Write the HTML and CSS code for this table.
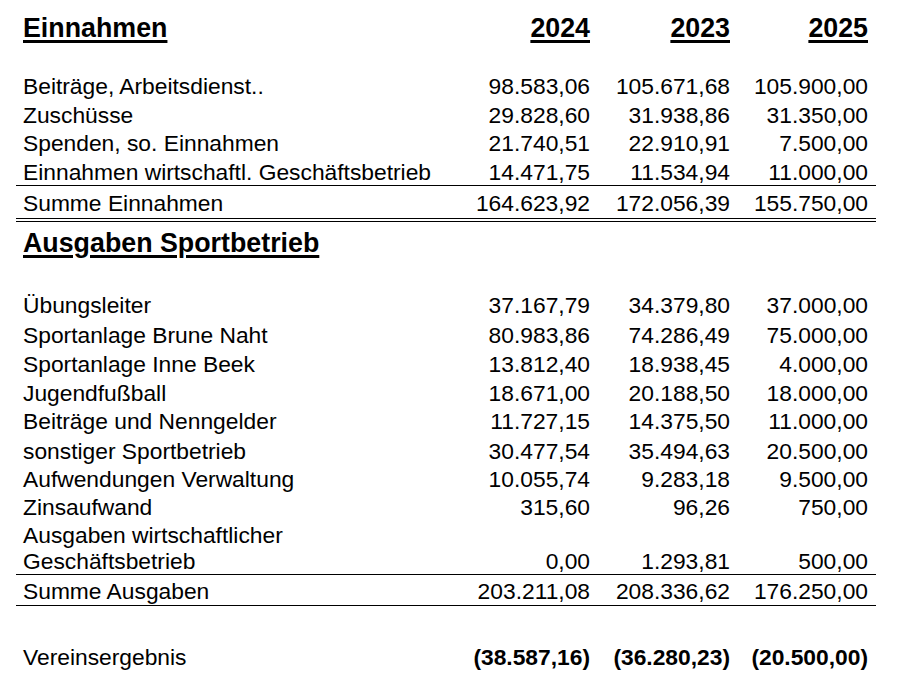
FILE: index.html
```html
<!DOCTYPE html>
<html lang="de">
<head>
<meta charset="utf-8">
<title>Haushalt</title>
<link rel="stylesheet" href="styles.css">
</head>
<body>
<div class="sheet">
  <div class="row hd">
    <div class="lab"><span class="u">Einnahmen</span></div>
    <div class="num"><span class="u">2024</span></div>
    <div class="num"><span class="u">2023</span></div>
    <div class="num"><span class="u">2025</span></div>
  </div>
  <div class="row h27"></div>
  <div class="row h29"><div class="lab">Beiträge, Arbeitsdienst..</div><div class="num">98.583,06</div><div class="num">105.671,68</div><div class="num">105.900,00</div></div>
  <div class="row h29"><div class="lab">Zuschüsse</div><div class="num">29.828,60</div><div class="num">31.938,86</div><div class="num">31.350,00</div></div>
  <div class="row h28"><div class="lab">Spenden, so. Einnahmen</div><div class="num">21.740,51</div><div class="num">22.910,91</div><div class="num">7.500,00</div></div>
  <div class="row h29 line"><div class="lab">Einnahmen wirtschaftl. Geschäftsbetrieb</div><div class="num">14.471,75</div><div class="num">11.534,94</div><div class="num">11.000,00</div></div>
  <div class="row sum1 line"><div class="lab">Summe Einnahmen</div><div class="num">164.623,92</div><div class="num">172.056,39</div><div class="num">155.750,00</div></div>
  <div class="row hd2">
    <div class="lab"><span class="u">Ausgaben Sportbetrieb</span></div>
    <div class="num"></div><div class="num"></div><div class="num"></div>
  </div>
  <div class="row h30"></div>
  <div class="row h30"><div class="lab">Übungsleiter</div><div class="num">37.167,79</div><div class="num">34.379,80</div><div class="num">37.000,00</div></div>
  <div class="row h30"><div class="lab">Sportanlage Brune Naht</div><div class="num">80.983,86</div><div class="num">74.286,49</div><div class="num">75.000,00</div></div>
  <div class="row h29"><div class="lab">Sportanlage Inne Beek</div><div class="num">13.812,40</div><div class="num">18.938,45</div><div class="num">4.000,00</div></div>
  <div class="row h29"><div class="lab">Jugendfußball</div><div class="num">18.671,00</div><div class="num">20.188,50</div><div class="num">18.000,00</div></div>
  <div class="row h28"><div class="lab">Beiträge und Nenngelder</div><div class="num">11.727,15</div><div class="num">14.375,50</div><div class="num">11.000,00</div></div>
  <div class="row h30"><div class="lab">sonstiger Sportbetrieb</div><div class="num">30.477,54</div><div class="num">35.494,63</div><div class="num">20.500,00</div></div>
  <div class="row h28"><div class="lab">Aufwendungen Verwaltung</div><div class="num">10.055,74</div><div class="num">9.283,18</div><div class="num">9.500,00</div></div>
  <div class="row h28"><div class="lab">Zinsaufwand</div><div class="num">315,60</div><div class="num">96,26</div><div class="num">750,00</div></div>
  <div class="row h54 line"><div class="lab">Ausgaben wirtschaftlicher<br>Geschäftsbetrieb</div><div class="num">0,00</div><div class="num">1.293,81</div><div class="num">500,00</div></div>
  <div class="row sum2 line"><div class="lab">Summe Ausgaben</div><div class="num">203.211,08</div><div class="num">208.336,62</div><div class="num">176.250,00</div></div>
  <div class="row h32"></div>
  <div class="row h32"><div class="lab">Vereinsergebnis</div><div class="num b">(38.587,16)</div><div class="num b">(36.280,23)</div><div class="num b">(20.500,00)</div></div>
</div>
</body>
</html>
```
FILE: styles.css
```css
html, body {
  margin: 0;
  padding: 0;
  background: #fff;
}
body {
  font-family: "Liberation Sans", Arial, sans-serif;
  color: #000;
  font-size: 22.8px;
}
.sheet {
  padding-left: 16px;
  width: 860px;
}
.row {
  display: grid;
  grid-template-columns: 441px 140px 141px 138px;
  align-items: end;
  line-height: 26px;
  box-sizing: content-box;
}
.lab {
  padding-left: 7px;
  white-space: nowrap;
}
.num {
  text-align: right;
  padding-right: 7px;
  white-space: nowrap;
}
.num + .num {
  padding-right: 8px;
}
.b {
  font-weight: bold;
}
.hd, .hd2 {
  font-size: 26.8px;
  font-weight: bold;
  line-height: 30px;
}
.hd { height: 43px; }
.hd2 {
  height: 36px;
  margin-top: 2px;
  border-top: 1px solid #000;
}
.u {
  text-decoration: underline;
  text-decoration-thickness: 3px;
  text-underline-offset: 3px;
}
.h27 { height: 27px; }
.h28 { height: 28px; }
.h29 { height: 29px; }
.h30 { height: 30px; }
.h32 { height: 32px; }
.h54 { height: 54px; }
.sum1 {
  height: 30px;
  padding-bottom: 2px;
}
.sum2 {
  height: 29px;
  padding-bottom: 1px;
}
.line {
  border-bottom: 1px solid #000;
}
```
